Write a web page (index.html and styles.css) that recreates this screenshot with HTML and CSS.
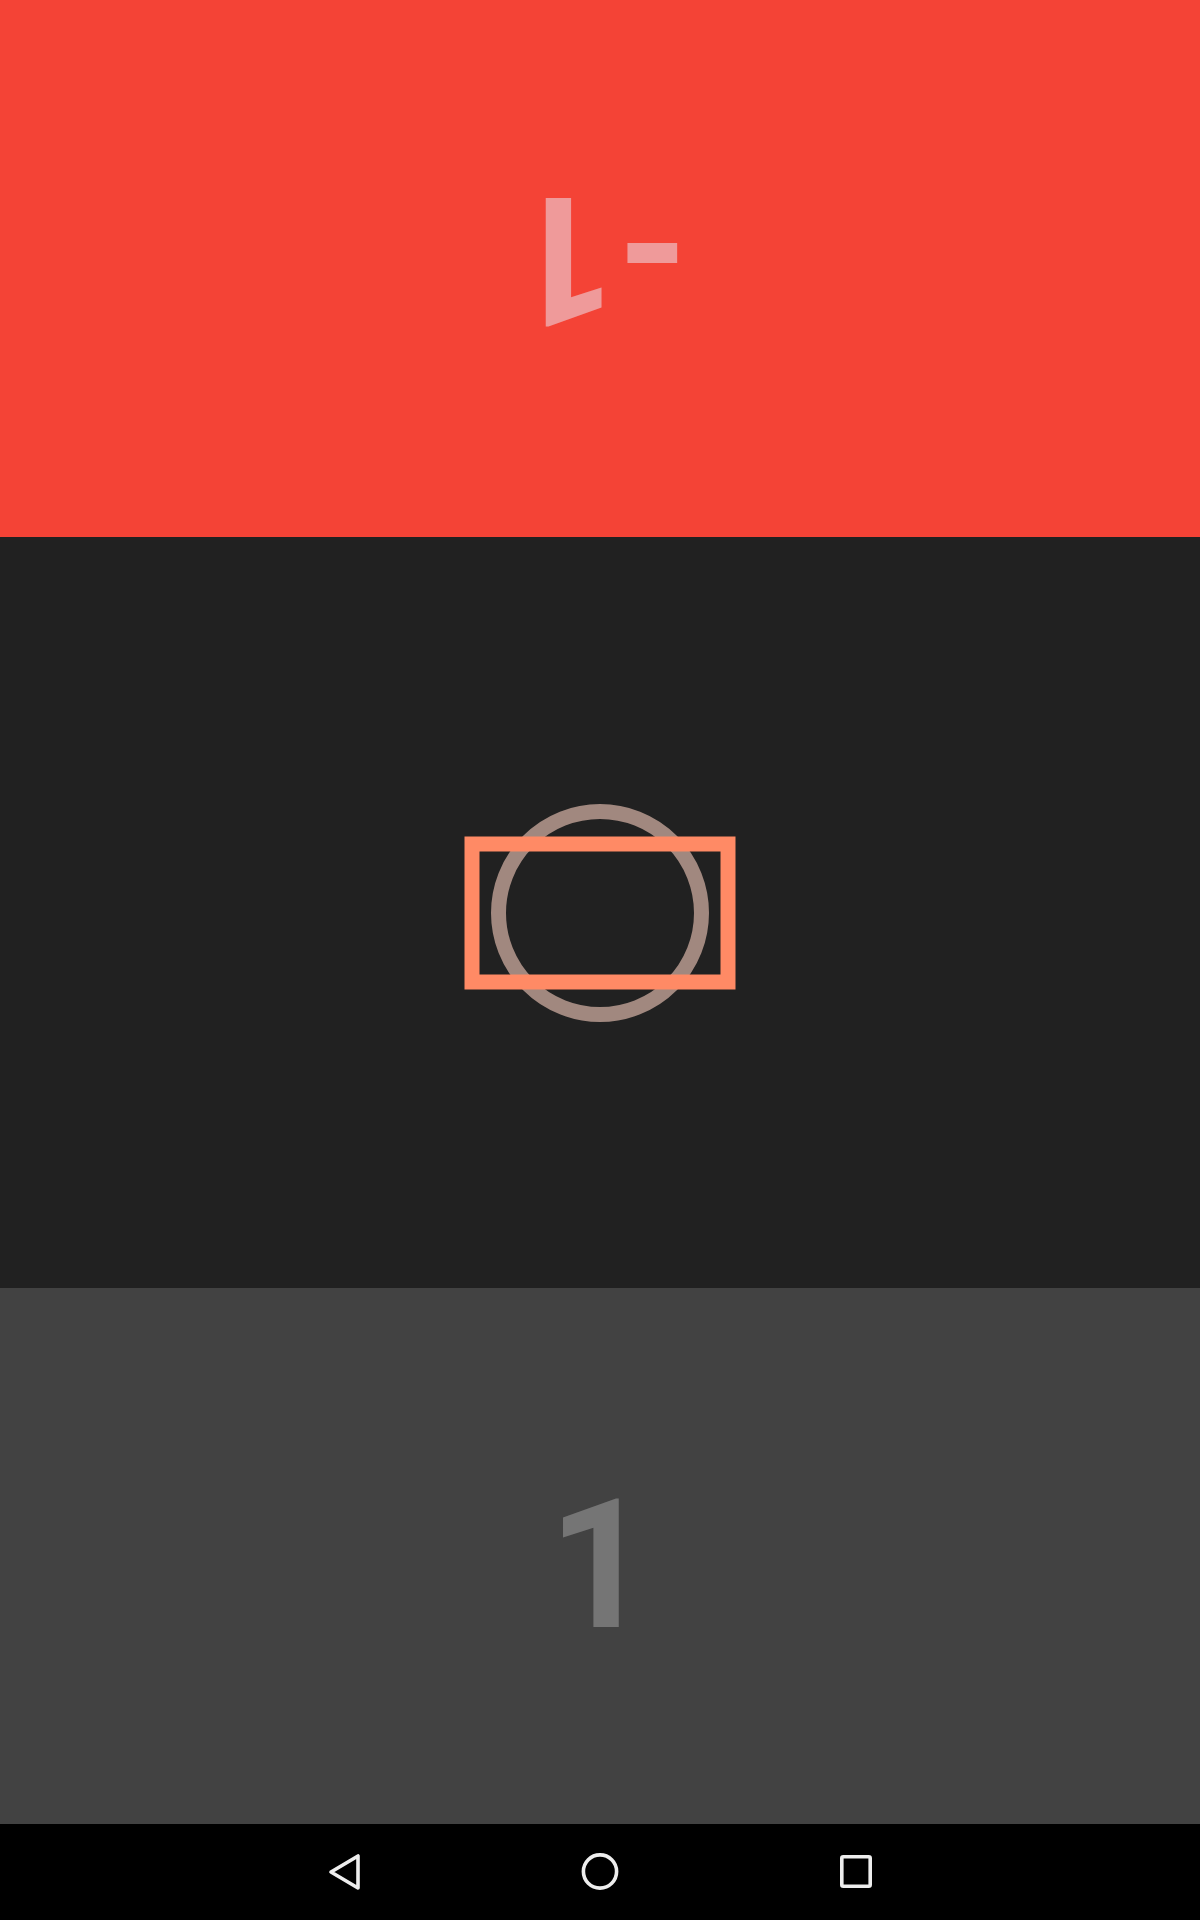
FILE: index.html
```html
<!DOCTYPE html>
<html>
<head>
<meta charset="utf-8">
<link rel="stylesheet" href="styles.css">
</head>
<body>
<div class="screen">
  <div class="panel panel-red">
    <div class="digit digit-top">-1</div>
  </div>
  <div class="panel panel-dark">
    <svg class="shapes" width="272" height="220" viewBox="0 0 272 220">
      <circle cx="136" cy="110" r="101.5" fill="none" stroke="#A1887F" stroke-width="15"/>
      <rect x="8" y="41" width="256" height="138" fill="none" stroke="#FF8A65" stroke-width="15"/>
    </svg>
  </div>
  <div class="panel panel-gray">
    <div class="digit digit-bottom">1</div>
  </div>
  <div class="navbar">
    <svg class="nav-icon" width="48" height="48" viewBox="0 0 48 48">
      <path d="M38 8 L38 40 L11 24 Z" fill="none" stroke="#EEEEEE" stroke-width="3.6" stroke-linejoin="round"/>
    </svg>
    <svg class="nav-icon" width="48" height="48" viewBox="0 0 48 48">
      <circle cx="24" cy="23.5" r="16.6" fill="none" stroke="#EEEEEE" stroke-width="3.6"/>
    </svg>
    <svg class="nav-icon" width="48" height="48" viewBox="0 0 48 48">
      <rect x="9.8" y="8.8" width="28.4" height="29.4" rx="1.5" fill="none" stroke="#EEEEEE" stroke-width="3.6"/>
    </svg>
  </div>
</div>
</body>
</html>
```
FILE: styles.css
```css
html, body {
  margin: 0;
  padding: 0;
  background: #000;
}
.screen {
  width: 1200px;
  height: 1920px;
  display: flex;
  flex-direction: column;
  overflow: hidden;
}
.panel {
  display: flex;
  align-items: center;
  justify-content: center;
  flex-shrink: 0;
}
.panel-red {
  height: 537px;
  background: #F44336;
}
.panel-dark {
  height: 751px;
  background: #212121;
}
.panel-gray {
  height: 536px;
  background: #424242;
}
.digit {
  font-family: Roboto, "Liberation Sans", sans-serif;
  font-size: 180px;
  font-weight: 700;
  line-height: 1;
  padding-top: 19px;
}
.digit-top {
  color: #EF9A9A;
  transform: rotate(180deg);
}
.digit-bottom {
  color: #757575;
}
.shapes {
  display: block;
}
.navbar {
  height: 96px;
  background: #000;
  display: flex;
  align-items: center;
  justify-content: center;
  gap: 208px;
  flex-shrink: 0;
}
.nav-icon {
  display: block;
}
```
